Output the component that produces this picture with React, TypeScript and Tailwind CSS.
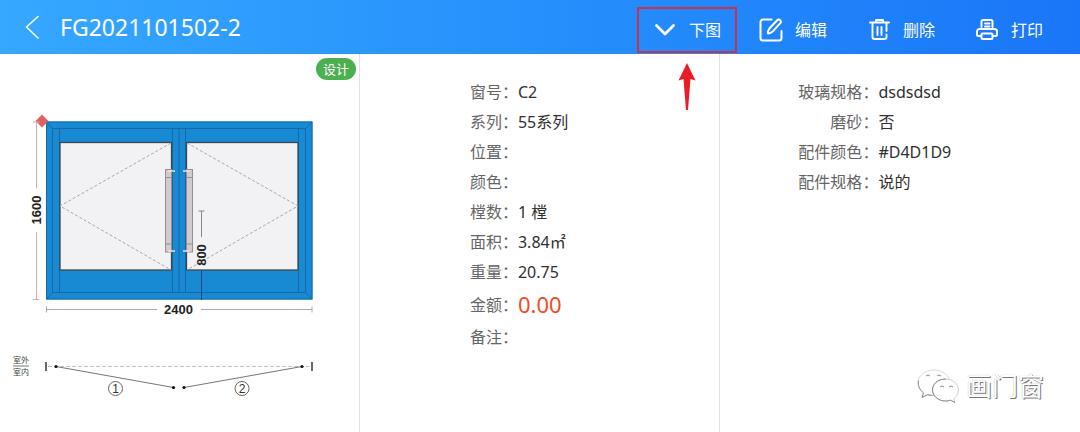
import React from 'react';

interface Field {
  label: string;
  value: string;
  highlight?: boolean;
}

interface ActionButtonProps {
  label: string;
  icon: React.ReactNode;
  active?: boolean;
}

const windowFields: Field[] = [
  { label: '窗号', value: 'C2' },
  { label: '系列', value: '55系列' },
  { label: '位置', value: '' },
  { label: '颜色', value: '' },
  { label: '樘数', value: '1 樘' },
  { label: '面积', value: '3.84㎡' },
  { label: '重量', value: '20.75' },
  { label: '金额', value: '0.00', highlight: true },
  { label: '备注', value: '' },
];

const glassFields: Field[] = [
  { label: '玻璃规格', value: 'dsdsdsd' },
  { label: '磨砂', value: '否' },
  { label: '配件颜色', value: '#D4D1D9' },
  { label: '配件规格', value: '说的' },
];

const iconProps = {
  viewBox: '0 0 24 24',
  fill: 'none',
  stroke: 'currentColor',
  strokeLinecap: 'round' as const,
  strokeLinejoin: 'round' as const,
  className: 'size-6 shrink-0',
  'aria-hidden': true,
};

const ChevronIcon = () => (
  <svg {...iconProps} strokeWidth="2.8">
    <path d="M3.5 7.500l8.500 8.500 8.500-8.500" />
  </svg>
);

const EditIcon = () => (
  <svg {...iconProps} strokeWidth="2">
    <path d="M12.500 1.500H4A2.500 2.500 0 0 0 1.500 4v16A2.500 2.500 0 0 0 4 22.500h16a2.500 2.500 0 0 0 2.500-2.500V13" />
    <path d="M9 15.500c-.5-1.800.2-3.600 1.600-5.200l7.600-8a2 2 0 0 1 3 0 2 2 0 0 1 .1 2.900l-7.500 8.200c-1.300 1.300-3 2.200-4.800 2.100z" />
  </svg>
);

const TrashIcon = () => (
  <svg {...iconProps} strokeWidth="1.9">
    <path d="M3 4.500h19M9 4V2h7v2M5.500 5v14a2 2 0 0 0 2 2h10a2 2 0 0 0 2-2v-2.500M19.500 5v8M10.500 9v8M14.500 9v8" />
  </svg>
);

const PrinterIcon = () => (
  <svg {...iconProps} strokeWidth="2">
    <path d="M6.500 9V3.500A1.500 1.500 0 0 1 8 2h8a1.500 1.500 0 0 1 1.500 1.500V9M10 5.500h4.500M10 8.500h4.500" />
    <path d="M6 18H3.500A1.500 1.500 0 0 1 2 16.500v-3A2.500 2.500 0 0 1 4.500 11h15a2.500 2.500 0 0 1 2.500 2.500v3a1.500 1.500 0 0 1-1.500 1.500H18" />
    <rect x="6.500" y="15.500" width="11" height="5.500" rx="1" />
  </svg>
);

const ActionButton: React.FC<ActionButtonProps> = ({ label, icon, active }) => (
  <button
    type="button"
    className={
      active
        ? 'flex h-[46px] items-center gap-3 border-2 border-[#c8324a] px-3.5 text-base text-white'
        : 'flex h-[46px] items-center gap-3 border-2 border-transparent px-3.5 text-base text-white'
    }
  >
    {icon}
    <span>{label}</span>
  </button>
);

const FieldList: React.FC<{ fields: Field[] }> = ({ fields }) => (
  <dl className="pt-[23px] text-base">
    {fields.map((field) => (
      <div key={field.label} className="flex items-center">
        <dt className="w-[44%] shrink-0 text-right leading-[30px] text-[#666]">{field.label}：</dt>
        <dd
          className={
            field.highlight
              ? 'text-[22px] leading-[35px] text-[#f04a2a]'
              : 'leading-[30px] text-[#303030]'
          }
        >
          {field.value}
        </dd>
      </div>
    ))}
  </dl>
);

// Front elevation with dimensions, plan view below
const WindowDrawing = () => (
  <svg viewBox="0 0 359 310" className="w-full" role="img" aria-label="C2">
    {/* Frame */}
    <rect x="46" y="21.5" width="266.5" height="178" fill="#178ad3" />
    <g fill="none" stroke="#1669a6" strokeWidth="1">
      <rect x="46.5" y="22" width="265.5" height="177" />
      <path d="M52.5 28.5H305.5V192.5H52.5zM46.5 22l6 6.5M312 22l-6.5 6.5M46.5 199l6-6.5M312 199l-6.5-6.5" />
      <path d="M59.5 28.5v164M172.5 28.5v164M179 28.5v164M185.500 28.5v164M298.5 28.5v164" />
    </g>

    {/* Glass */}
    <g fill="#f2f2f4" stroke="#3c464f" strokeWidth="1.3">
      <rect x="60" y="42.5" width="111.5" height="127.5" />
      <rect x="186.5" y="42.5" width="111.5" height="127.5" />
    </g>
    <g fill="none" stroke="#a8a8ac" strokeWidth="1" strokeDasharray="3 2">
      <path d="M171 43L60 106l111 64" />
      <path d="M187 43l111 63-111 64" />
    </g>

    {/* Handles */}
    <g fill="#d3cacd" stroke="#988d92" strokeWidth="1">
      <rect x="165.5" y="69.5" width="6" height="82.5" />
      <rect x="186.5" y="69.5" width="6" height="82.5" />
      <path d="M165.5 77.5h6M186.5 77.5h6M165.5 144h6M186.5 144h6" />
    </g>
    <path d="M168 71h7M183 71h7M168 151h7M183 151h7" stroke="#e6e2e6" strokeWidth="1.6" />

    {/* Dimensions */}
    <path d="M42 14.5l6.5 6.5-6.5 6.5-6.5-6.5z" fill="#db6367" />
    <g fill="none" strokeWidth="1">
      <path d="M36.5 22v66M36.5 132v67M33 199.5h6.5M33 22h6.5" stroke="#dfa9a9" />
      <path d="M46.5 209.5H157M201 209.5h111M46.5 206.5v6M312 206.5v6" stroke="#aaa" />
      <path d="M201.5 111v26M198.5 111h6" stroke="#88888c" />
      <path d="M201.5 171v29" stroke="#174a78" />
    </g>
    <g className="text-[13px] font-bold" fontFamily="Liberation Sans, Arial, sans-serif" fill="#222" textAnchor="middle">
      <text transform="translate(41 110) rotate(-90)">1600</text>
      <text transform="translate(206 155) rotate(-90)">800</text>
      <text x="178.5" y="214">2400</text>
    </g>

    {/* Plan view */}
    <g className="text-[8px]" fill="#444" textAnchor="middle">
      <text x="21" y="263">室外</text>
      <text x="21" y="275">室内</text>
    </g>
    <path d="M13 266h16" stroke="#777" />
    <path d="M46 262v9M312 262v9" stroke="#444" strokeWidth="1.6" />
    <path d="M48 266.5h262" stroke="#c4c4c4" strokeDasharray="4 2" />
    <path d="M56 266.5l117.5 21M302 266.5l-118 21" stroke="#777" />
    <g fill="#111">
      <circle cx="56" cy="266.5" r="1.6" />
      <circle cx="173.5" cy="287.5" r="1.6" />
      <circle cx="184" cy="287.5" r="1.6" />
      <circle cx="302" cy="266.5" r="1.6" />
    </g>
    <g fill="none" stroke="#666">
      <circle cx="115.5" cy="288.5" r="7" />
      <circle cx="242" cy="288.5" r="7" />
    </g>
    <g className="text-[12px]" fontFamily="Liberation Sans, Arial, sans-serif" fill="#333" textAnchor="middle">
      <text x="115.5" y="293">1</text>
      <text x="242" y="293">2</text>
    </g>
  </svg>
);

const WechatIcon = () => (
  <svg viewBox="0 0 44 36" className="h-9 w-11" fill="white" stroke="#8c8c8c" strokeWidth="1" aria-hidden>
    <path d="M18 2C9 2 2 7.500 2 15c0 4 2.200 7.500 5.500 9.800L6 29.500l5.500-2.700c2 .5 4 .7 6.500.7 9 0 16-5.500 16-12.500S27 2 18 2z" stroke="#dcdcdc" />
    <path d="M2.500 12.500C1.500 18 4 22 7.500 24.800L6 29.500l5.500-2.700 5 .6" fill="none" />
    <path d="M29.500 11C22 11 16.500 16 16.500 22s5.500 11 13 11c1.800 0 3.500-.2 5-.8l4.500 2.300-1.200-3.900c2.900-2 4.700-5 4.700-8.600 0-6-5.500-11-13-11z" stroke="#d0d0d0" />
    <path d="M30 11C21 11 16.500 16.500 16.500 22s5.500 11 13 11c1.800 0 3.500-.2 5-.8l4.500 2.300" fill="none" />
    <path d="M10 8q2-2 4 0M21 8q2-2 4 0M24 19q2-2 4 0M33 19q2-2 4 0" fill="none" />
  </svg>
);

const App: React.FC = () => {
  return (
    <div
      lang="zh-CN"
      className="relative flex min-h-screen flex-col bg-white font-['Noto_Sans','Noto_Sans_CJK_SC',sans-serif]"
    >
      <header className="flex h-[54px] items-center justify-between bg-linear-to-r from-[#36a8ff] to-[#1a76f8] pr-[21px] pl-5 text-white">
        <div className="flex items-center gap-4">
          <button type="button" aria-label="返回" className="size-6">
            <svg {...iconProps} strokeWidth="1.6">
              <path d="M18 1.5L6.5 12 18 23" />
            </svg>
          </button>
          <h1 className="text-[23px]">FG2021101502-2</h1>
        </div>

        <nav className="flex gap-2 pt-1.5">
          <div className="relative -mr-0.5">
            <ActionButton label="下图" icon={<ChevronIcon />} active />
            <svg viewBox="0 0 18 48" className="absolute top-full left-1/2 mt-2.5 h-12 w-[18px] -translate-x-1/2" aria-hidden>
              <path d="M9 0l8.500 17.500-5-1.500L10 47H8L5.500 16 .5 17.500z" fill="#ea1c28" />
            </svg>
          </div>
          <ActionButton label="编辑" icon={<EditIcon />} />
          <ActionButton label="删除" icon={<TrashIcon />} />
          <ActionButton label="打印" icon={<PrinterIcon />} />
        </nav>
      </header>

      <main className="grid flex-1 grid-cols-3">
        <section className="relative border-r border-[#e2e2e6] pt-[46px]">
          <span className="absolute top-1 right-[3px] rounded-full bg-[#4caf50] px-[7px] text-[13px] leading-[22px] text-white">
            设计
          </span>
          <WindowDrawing />
        </section>
        <section className="border-r border-[#e2e2e6]">
          <FieldList fields={windowFields} />
        </section>
        <section>
          <FieldList fields={glassFields} />
        </section>
      </main>

      <div className="absolute right-9 bottom-7 flex items-center gap-1.5">
        <WechatIcon />
        <span className="text-[26px] leading-9 text-white [text-shadow:1px_1px_0_#777,0_0_1px_#aaa]">画门窗</span>
      </div>
    </div>
  );
};

export default App;
